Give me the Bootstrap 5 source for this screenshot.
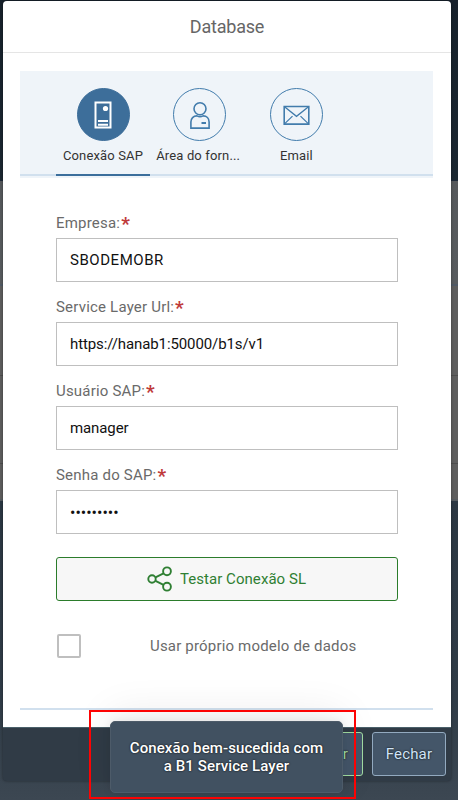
<!DOCTYPE html>
<html lang="pt-BR">
<head>
<meta charset="utf-8">
<meta name="viewport" content="width=device-width, initial-scale=1">
<title>Database</title>
<link href="https://cdn.jsdelivr.net/npm/bootstrap@5.3.0/dist/css/bootstrap.min.css" rel="stylesheet">
<style>
html,body{height:100%}
body{font-family:Roboto,"Liberation Sans",sans-serif;font-size:16px;line-height:20px;color:#333;overflow:hidden;
 background:
 linear-gradient(#4d4d4d,#4d4d4d) 0 375px/100% 1px no-repeat,
 linear-gradient(#4d4d4d,#4d4d4d) 0 463px/100% 1px no-repeat,
 linear-gradient(#17212b 0,#1b2731 180px,#1c2838 180px,#1c2838 181px,#56595c 181px,#585c5f 284px,#505a66 284px,#505a66 286px,#5e5e5e 286px,#5e5e5e 499px,#565b60 499px,#565b60 501px,#2b3742 501px,#303c47 700px,#3c4752 800px)}
.dialog-box{width:448px;height:780px;margin:1px 0 0 3px;border-radius:4px;background:#303b46;box-shadow:0 0 3px rgba(0,0,0,.4);overflow:hidden}
.dialog-title{height:52px;border-bottom:1px solid #e5e5e5;font-size:18px;color:#666;letter-spacing:-.2px}
.dialog-main{height:674px;padding:18px 18px 17px 17px}
.tab-strip{background:#eff4f9;height:107px;padding-top:17px}
.tab-lower{border-bottom:2px solid #d1e0ee;height:88px;padding-left:36px}
.tab-list{gap:2.7px}
.tab-item{width:94px;height:88px;font-size:13px;line-height:18px;padding:0;border:0;background:none;color:#333}
.tab-item.is-current{border-bottom:2px solid #3b6e9c}
.tab-ring{width:53px;height:53px;border:1px solid #427cac;border-radius:50%;color:#427cac;margin-bottom:6px}
.is-current .tab-ring{background:#3d6e9a;border-color:#3d6e9a;color:#fff}
.tab-text{letter-spacing:.15px;white-space:nowrap}
.tab-text.cut-off{letter-spacing:.15px;margin-left:-3px}
.fields{padding:35px 35px 0 36px;height:530px}
.field-label{height:25px;font-size:15px;line-height:20px;color:#6a6a6a;letter-spacing:.2px}
.field-label b{color:#bf3a3a;font-size:19px;line-height:22px;margin-left:1px}
.field-box{height:44px;border:1px solid #bfbfbf;border-radius:0;padding:0 13px 1px;font-size:15px;letter-spacing:-.1px;color:#111;margin-bottom:15px}
.field-box.wide-caps{letter-spacing:.55px}
.field-box[type=password]{font-size:16px;letter-spacing:0;padding-bottom:0}
.test-btn{height:44px;background:#f7f7f7;border:1px solid #2b7c2b;border-radius:3px;color:#2f7f33;font-size:15px;letter-spacing:.06px;margin-top:23px;gap:7px;padding:0 1px 0 0}
.check-row{margin-top:33px;height:24px;padding-left:1px}
.check-row .form-check-input{width:24px;height:24px;border:2px solid #bfbfbf;border-radius:2px;margin:0}
.check-row label{margin-left:69px;font-size:15px;letter-spacing:.18px;color:#6a6a6a}
.end-line{height:2px;background:#d1e0ee}
.dialog-actions{height:54px;padding:4px 5px 0;border-top:1px solid #4a606a;gap:9px}
.act-btn{width:74px;height:44px;border-radius:3px;font-size:15px;letter-spacing:.15px;background:#445669;border:1px solid #93aac0;color:#d0e4f7;padding:0;text-shadow:0 0 2px #000}
.act-ok{border-color:#a1dba1;color:#a1dba1;padding-left:2px}
.toast-note{left:110px;top:721px;width:233px;height:72px;border-radius:5px;background:#415161;border:1px solid #4d5b69;color:#fff;font-weight:500;font-size:15px;letter-spacing:.1px;line-height:18px;text-shadow:0 0 2px #000;box-shadow:0 0 8px rgba(0,0,0,.08),0 -8px 40px rgba(0,0,0,.08)}
.red-frame{left:89px;top:710px;width:267px;height:89px;border:2px solid #fd0303}
</style>
<script src="https://cdn.jsdelivr.net/npm/bootstrap@5.3.0/dist/js/bootstrap.bundle.min.js"></script>
</head>
<body>
<div class="dialog-box d-flex flex-column" role="dialog">
  <header class="dialog-title bg-white d-flex align-items-center justify-content-center flex-shrink-0"><span>Database</span></header>
  <main class="dialog-main bg-white flex-shrink-0">
    <div class="tab-strip">
      <div class="tab-lower">
        <nav class="tab-list d-flex" aria-label="Seções">
          <button class="tab-item is-current d-flex flex-column align-items-center">
            <span class="tab-ring d-flex align-items-center justify-content-center flex-shrink-0"><svg width="18" height="28" viewBox="0 0 18 28"><path d="M1.5 1.500h15v25h-15z" fill="none" stroke="currentColor" stroke-width="2"/><circle cx="11.5" cy="7.500" r="2.6" fill="currentColor"/><path d="M4 20h10M4 23.700h10" stroke="currentColor" stroke-width="2"/></svg></span>
            <span class="tab-text">Conexão SAP</span>
          </button>
          <button class="tab-item d-flex flex-column align-items-center">
            <span class="tab-ring d-flex align-items-center justify-content-center flex-shrink-0"><svg width="20" height="28" viewBox="0 0 20 28" fill="none" stroke="currentColor" stroke-width="1.6"><circle cx="10" cy="7.800" r="6"/><path d="M.9 27.100v-6c0-3.700 2.500-6.200 6-6.200 2 1 4.200 1 6.200 0 3.500 0 6 2.500 6 6.200v6z"/><path d="M11.500 22h4.500" stroke-width="2"/></svg></span>
            <span class="tab-text cut-off">Área do forn...</span>
          </button>
          <button class="tab-item d-flex flex-column align-items-center">
            <span class="tab-ring d-flex align-items-center justify-content-center flex-shrink-0"><svg width="27" height="21" viewBox="0 0 27 21" fill="none" stroke="currentColor" stroke-width="1.600"><path d="M1.200 2.500h24.600v17.600H1.200z"/><path d="M1.500 2.700l12 9.600 12-9.600M1.500 19.900l8-7.800M25.500 19.900l-8-7.800" stroke-width="1.300"/></svg></span>
            <span class="tab-text">Email</span>
          </button>
        </nav>
      </div>
    </div>
    <form class="fields">
      <label class="field-label d-flex" for="f1"><span>Empresa:</span><b>*</b></label>
      <input id="f1" class="form-control field-box wide-caps" value="SBODEMOBR">
      <label class="field-label d-flex" for="f2"><span>Service Layer Url:</span><b>*</b></label>
      <input id="f2" class="form-control field-box" value="https://hanab1:50000/b1s/v1">
      <label class="field-label d-flex" for="f3"><span>Usuário SAP:</span><b>*</b></label>
      <input id="f3" class="form-control field-box" value="manager">
      <label class="field-label d-flex" for="f4"><span>Senha do SAP:</span><b>*</b></label>
      <input id="f4" type="password" class="form-control field-box mb-0" value="managerb1">
      <button type="button" class="btn test-btn w-100 d-flex align-items-center justify-content-center">
        <svg width="26" height="26" viewBox="0 0 26 26" fill="none" stroke="currentColor" stroke-width="1.900"><circle cx="5" cy="13" r="3.700"/><circle cx="20" cy="5.300" r="3.900"/><circle cx="20" cy="20.700" r="3.900"/><path d="M8.500 11.300l8-4M8.500 14.800l8 4"/></svg>
        <span>Testar Conexão SL</span>
      </button>
      <div class="check-row d-flex align-items-center"><input class="form-check-input" type="checkbox" id="own"><label for="own">Usar próprio modelo de dados</label></div>
    </form>
    <div class="end-line"></div>
  </main>
  <footer class="dialog-actions d-flex justify-content-end align-items-start">
    <button class="btn act-btn act-ok">Salvar</button>
    <button class="btn act-btn">Fechar</button>
  </footer>
</div>
<div class="toast-note position-absolute d-flex align-items-center justify-content-center text-center"><span>Conexão bem-sucedida com<br>a B1 Service Layer</span></div>
<div class="red-frame position-absolute"></div>
</body>
</html>
